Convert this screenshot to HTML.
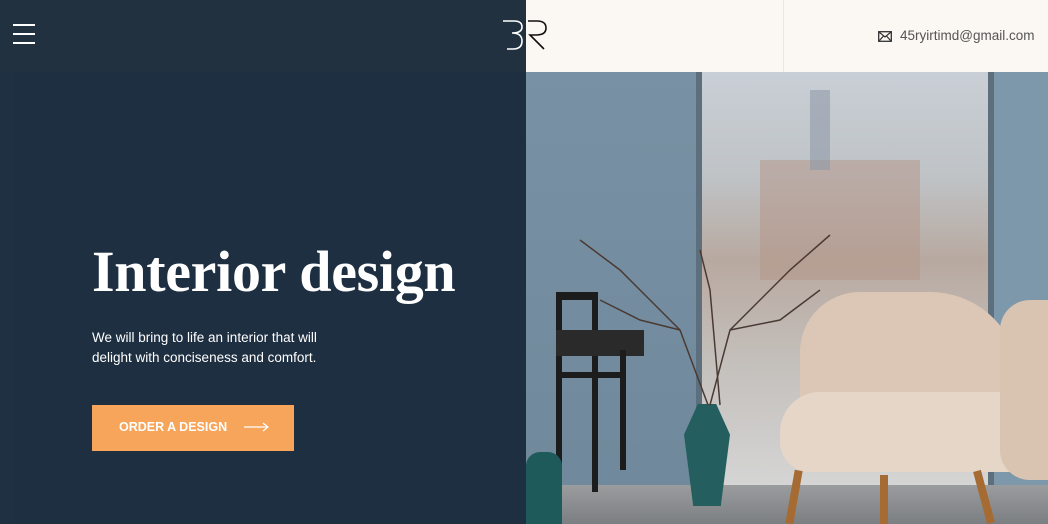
<!DOCTYPE html>
<html><head><style>
body{margin:0;width:1048px;height:524px;overflow:hidden;position:relative;font-family:"Liberation Sans",sans-serif;background:#1f3042}
.a{position:absolute}
</style></head><body>
<div class="a" style="left:526px;top:72px;width:522px;height:452px;background:#7a93a6"></div>
<div class="a" style="left:526px;top:72px;width:175px;height:452px;background:linear-gradient(180deg,#7891a4,#6f889b)"></div>
<div class="a" style="left:700px;top:72px;width:290px;height:420px;background:linear-gradient(180deg,#c9cfd6 0%,#bfc3c6 25%,#b8a9a0 45%,#c4c0bc 70%,#d6d6d6 100%)"></div>
<div class="a" style="left:760px;top:160px;width:160px;height:120px;background:#b4978a;opacity:.55"></div>
<div class="a" style="left:810px;top:90px;width:20px;height:80px;background:#8f9aa8;opacity:.6"></div>
<div class="a" style="left:696px;top:72px;width:6px;height:430px;background:#5d6f7d"></div>
<div class="a" style="left:988px;top:72px;width:6px;height:430px;background:#5d6f7d"></div>
<div class="a" style="left:994px;top:72px;width:54px;height:430px;background:#7d97ab"></div>
<div class="a" style="left:526px;top:485px;width:522px;height:39px;background:linear-gradient(180deg,#9a9c9e,#7c7f82)"></div>
<div class="a" style="left:556px;top:292px;width:42px;height:8px;background:#1c1c1c"></div>
<div class="a" style="left:556px;top:292px;width:6px;height:200px;background:#1c1c1c"></div>
<div class="a" style="left:592px;top:292px;width:6px;height:200px;background:#1c1c1c"></div>
<div class="a" style="left:556px;top:330px;width:88px;height:26px;background:#2a2a2a"></div>
<div class="a" style="left:620px;top:350px;width:6px;height:120px;background:#1c1c1c"></div>
<div class="a" style="left:560px;top:372px;width:60px;height:6px;background:#1c1c1c"></div>
<div class="a" style="left:526px;top:452px;width:36px;height:72px;background:#1f5a5a;border-radius:14px 14px 0 0"></div>
<div class="a" style="left:684px;top:404px;width:46px;height:102px;background:#245e5e;clip-path:polygon(30% 0,70% 0,100% 30%,80% 100%,20% 100%,0 30%)"></div>
<svg class="a" style="left:560px;top:230px" width="280" height="190"><g stroke="#4a3a33" stroke-width="1.5" fill="none"><path d="M148 175 L120 100 L60 40 L20 10"/><path d="M120 100 L80 90 L40 70"/><path d="M150 175 L170 100 L230 40 L270 5"/><path d="M170 100 L220 90 L260 60"/><path d="M160 175 L150 60 L140 20"/></g></svg>
<div class="a" style="left:800px;top:292px;width:220px;height:140px;background:#dcc7b6;border-radius:60px 90px 20px 20px"></div>
<div class="a" style="left:780px;top:392px;width:260px;height:80px;background:#e6d6c8;border-radius:40px 40px 30px 30px"></div>
<div class="a" style="left:1000px;top:300px;width:48px;height:180px;background:#d9c3b1;border-radius:30px 0 0 30px"></div>
<div class="a" style="left:790px;top:470px;width:8px;height:54px;background:#a66b33;transform:rotate(10deg)"></div>
<div class="a" style="left:880px;top:475px;width:8px;height:49px;background:#a66b33"></div>
<div class="a" style="left:980px;top:470px;width:8px;height:54px;background:#a66b33;transform:rotate(-15deg)"></div>
<div class="a" style="left:0;top:0;width:526px;height:72px;background:#21313f"></div>
<div class="a" style="left:14px;top:72px;width:512px;height:452px;background:#1e2f41"></div>
<div class="a" style="left:526px;top:0;width:522px;height:72px;background:#fbf8f3"></div>
<div class="a" style="left:783px;top:0;width:1px;height:72px;background:#ece7df"></div>
<div class="a" style="left:13px;top:24px;width:22px;height:2px;background:#fff"></div>
<div class="a" style="left:13px;top:33px;width:22px;height:2px;background:#fff"></div>
<div class="a" style="left:13px;top:42px;width:22px;height:2px;background:#fff"></div>
<svg class="a" style="left:500px;top:18px" width="52" height="34"><path d="M3 3 H14 Q22 3 22 9 Q22 15 12 15 Q22 15 22 23 Q22 31 13 31 H7" stroke="#fff" stroke-width="1.6" fill="none"/><path d="M28 3 H37 Q46 3 46 10 Q46 17 36 17 H30 L44 31" stroke="#111" stroke-width="1.6" fill="none"/></svg>
<svg class="a" style="left:878px;top:31px" width="14" height="11"><rect x=".7" y=".7" width="12.6" height="9.6" fill="none" stroke="#333" stroke-width="1.3"/><path d="M1 1 L7 6 L13 1 M1 10 L5.5 5 M13 10 L8.5 5" stroke="#333" stroke-width="1.2" fill="none"/></svg>
<div class="a" style="left:900px;top:28px;font-size:13.5px;color:#555">45ryirtimd@gmail.com</div>
<div class="a" style="left:92px;top:238px;font-family:'Liberation Serif',serif;font-weight:bold;font-size:58px;color:#fff;letter-spacing:-.3px">Interior design</div>
<div class="a" style="left:92px;top:328px;font-size:13.5px;line-height:20px;color:#fff">We will bring to life an interior that will<br>delight with conciseness and comfort.</div>
<div class="a" style="left:92px;top:405px;width:202px;height:46px;background:#f7a55a"></div>
<div class="a" style="left:119px;top:420px;font-size:12.5px;font-weight:bold;color:#fff">ORDER A DESIGN</div>
<svg class="a" style="left:244px;top:422px" width="26" height="10"><path d="M0 5 H24 M19 1 L24 5 L19 9" stroke="#fff" stroke-width="1.2" fill="none"/></svg>
</body></html>
